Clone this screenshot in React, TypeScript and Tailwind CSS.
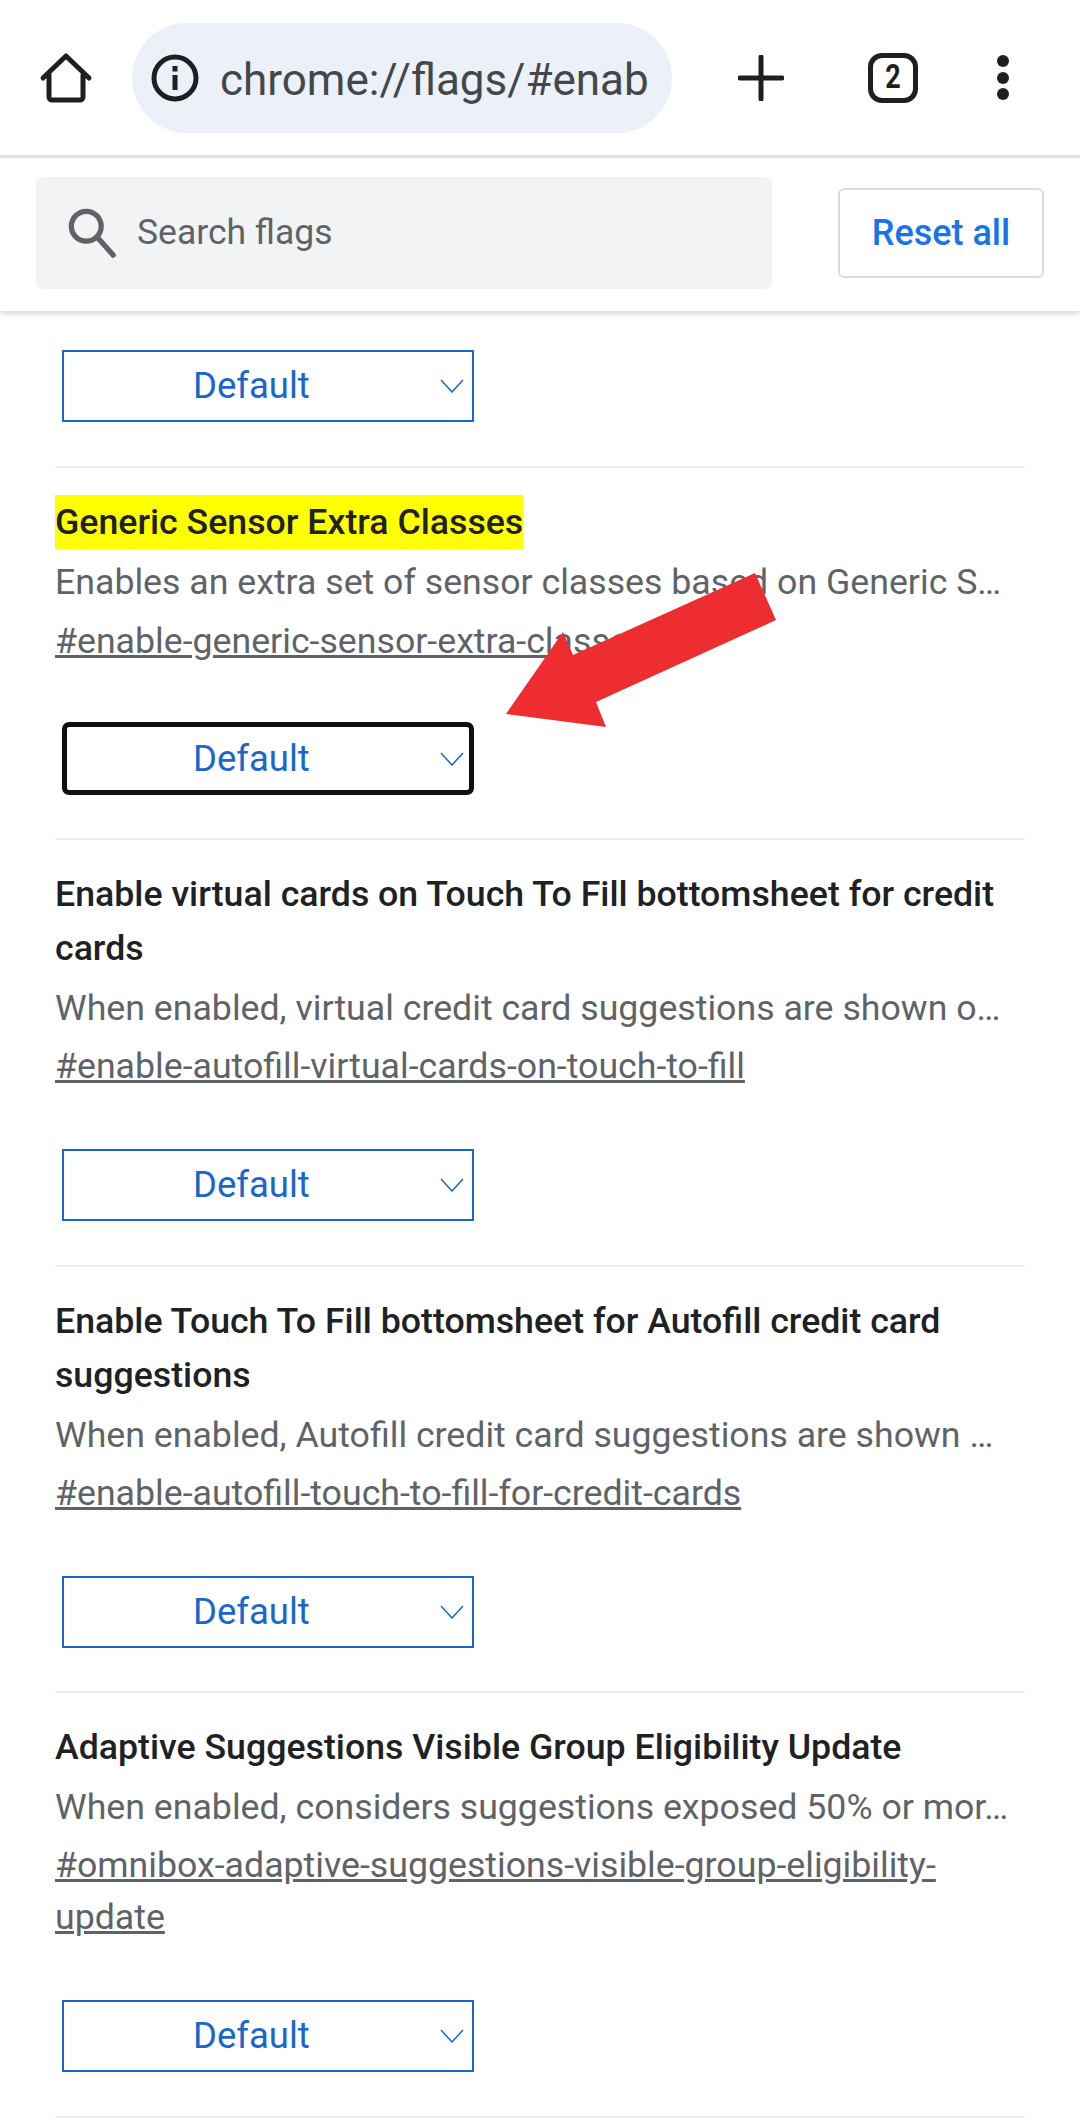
const FONT = "font-['Roboto','Liberation_Sans',sans-serif]";

const flags = [
  {
    title: 'Enable virtual cards on Touch To Fill bottomsheet for credit cards',
    desc: 'When enabled, virtual credit card suggestions are shown o…',
    link: '#enable-autofill-virtual-cards-on-touch-to-fill',
  },
  {
    title: 'Enable Touch To Fill bottomsheet for Autofill credit card suggestions',
    desc: 'When enabled, Autofill credit card suggestions are shown …',
    link: '#enable-autofill-touch-to-fill-for-credit-cards',
  },
  {
    title: 'Adaptive Suggestions Visible Group Eligibility Update',
    desc: 'When enabled, considers suggestions exposed 50% or mor…',
    link: '#omnibox-adaptive-suggestions-visible-group-eligibility-update',
  },
];

function HomeIcon() {
  return (
    <svg width="54" height="54" viewBox="0 0 54 54" fill="none" stroke="#1f1f1f" strokeWidth="5" strokeLinejoin="round" strokeLinecap="round">
      <path d="M4 27 L27 5 L50 27 M10 24 V46 a3 3 0 0 0 3 3 H41 a3 3 0 0 0 3 -3 V24" />
    </svg>
  );
}

function InfoIcon() {
  return (
    <svg width="48" height="48" viewBox="0 0 48 48" fill="none">
      <circle cx="24" cy="24" r="21" stroke="#1f1f1f" strokeWidth="5" />
      <rect x="21.5" y="12" width="5" height="5.5" fill="#1f1f1f" />
      <rect x="21.5" y="21" width="5" height="15" fill="#1f1f1f" />
    </svg>
  );
}

function Chevron() {
  return (
    <svg width="24" height="14" viewBox="0 0 24 14" fill="none" stroke="#1a66cc" strokeWidth="1.5">
      <path d="M1 1 L12 13 L23 1" />
    </svg>
  );
}

function FlagSelect({ focused }: { focused?: boolean }) {
  return (
    <div
      className={
        focused
          ? 'relative flex h-[73px] w-[412px] items-center rounded-[7px] border-[5px] border-[#111111] bg-white'
          : 'relative flex h-[72px] w-[412px] items-center border-2 border-[#1a66cc] bg-white'
      }
    >
      <span
        className={`absolute top-1/2 -translate-y-1/2 text-[36.5px] leading-none text-[#1a66cc] ${
          focused ? 'left-[126px]' : 'left-[129px]'
        }`}
      >
        Default
      </span>
      <span className={`absolute top-1/2 flex -translate-y-1/2 ${focused ? 'right-[5px]' : 'right-[8px]'}`}>
        <Chevron />
      </span>
    </div>
  );
}

export default function App() {
  return (
    <div className={`${FONT} relative h-[2125px] w-[1080px] overflow-hidden bg-white`}>
      {/* browser toolbar */}
      <div className="flex h-[158px] items-center border-b-[3px] border-[#e3e3e3]">
        <div className="ml-[39px] flex w-[93px] shrink-0">
          <HomeIcon />
        </div>
        <div className="flex h-[110px] w-[540px] shrink-0 items-center overflow-hidden rounded-full bg-[#ebf0f9] pl-[19px]">
          <InfoIcon />
          <span className="ml-[21px] translate-y-[2px] whitespace-nowrap text-[44px] leading-none text-[#44474a]">chrome://flags/#enab</span>
        </div>
        <svg className="ml-[66px] shrink-0" width="46" height="46" viewBox="0 0 46 46" stroke="#1f1f1f" strokeWidth="5" strokeLinecap="round">
          <path d="M23 2 V44 M2 23 H44" />
        </svg>
        <div className="ml-[84px] flex h-[50px] w-[50px] shrink-0 items-center justify-center rounded-[14px] border-[5px] border-[#1f1f1f] text-[27px] font-bold leading-none text-[#1f1f1f]">
          <span className="scale-y-125">2</span>
        </div>
        <div className="ml-[79px] flex shrink-0 flex-col gap-[4.5px]">
          <div className="h-[12px] w-[12px] rounded-full bg-[#1f1f1f]" />
          <div className="h-[12px] w-[12px] rounded-full bg-[#1f1f1f]" />
          <div className="h-[12px] w-[12px] rounded-full bg-[#1f1f1f]" />
        </div>
      </div>

      {/* search bar */}
      <div className="relative z-10 flex h-[153px] items-center bg-white pb-[4px] shadow-[0_3px_6px_rgba(0,0,0,0.16)]">
        <div className="ml-[36px] flex h-[112px] w-[736px] items-center rounded-[6px] bg-[#f1f3f4] pl-[32px]">
          <svg width="50" height="50" viewBox="0 0 52 52" fill="none" stroke="#5f6368" strokeWidth="5.5">
            <circle cx="19" cy="19" r="15.5" />
            <path d="M30 30 L47 49" strokeLinecap="round" />
          </svg>
          <span className="ml-[19px] text-[35.5px] leading-none text-[#5f6368]">Search flags</span>
        </div>
        <div className="ml-[66px] flex h-[90px] w-[206px] items-center justify-center rounded-[6px] border-2 border-[#dadce0] text-[36px] font-medium leading-none text-[#1a73e8]">
          Reset all
        </div>
      </div>

      {/* flag list */}
      <div className="mx-[55px] w-[970px]">
        <div className="ml-[7px] pt-[39px]">
          <FlagSelect />
        </div>

        <div className="mt-[44px] h-[372px] border-t-2 border-[#ececec] pt-[27px]">
          <span className="block w-fit bg-[#ffff00] text-[35.7px] font-medium leading-[54px] text-[#202124]">Generic Sensor Extra Classes</span>
          <div className="mt-[6px] whitespace-nowrap text-[35.7px] leading-[54px] text-[#5f6368]">
            Enables an extra set of sensor classes based on Generic S…
          </div>
          <div className="mt-[6px] text-[35.7px] leading-[52px] text-[#5f6368] underline">#enable-generic-sensor-extra-classes</div>
          <div className="ml-[7px] mt-[55px]">
            <FlagSelect focused />
          </div>
        </div>

        {flags.map((flag) => (
          <div key={flag.link} className="border-t-2 border-[#ececec] pb-[43.5px] pt-[27px]">
            <div className="text-[35.7px] font-medium leading-[54px] text-[#202124]">{flag.title}</div>
            <div className="mt-[6px] whitespace-nowrap text-[35.7px] leading-[54px] text-[#5f6368]">{flag.desc}</div>
            <div className="mt-[5px] text-[35.7px] leading-[52px] text-[#5f6368] underline">{flag.link}</div>
            <div className="ml-[7px] mt-[57px]">
              <FlagSelect />
            </div>
          </div>
        ))}
        <div className="border-t-2 border-[#ececec]" />
      </div>

      {/* red annotation arrow */}
      <svg className="absolute left-0 top-0 z-20" width="1080" height="2125" viewBox="0 0 1080 2125">
        <polygon points="506,714 563,632 573,655 755,573 776,620 596,702 606,727" fill="#ee2d30" />
      </svg>
    </div>
  );
}
